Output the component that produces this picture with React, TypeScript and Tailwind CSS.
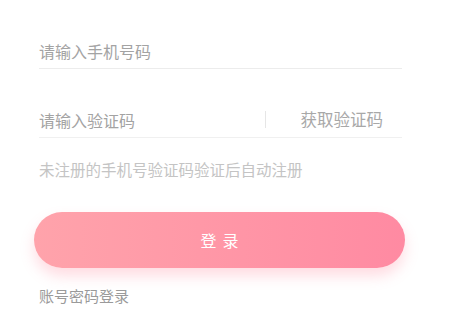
import React from 'react';

const font = { fontFamily: '"Noto Sans CJK SC", "Noto Sans", sans-serif' };

export default function App() {
  return (
    <div className="w-[449px] h-[324px] bg-white overflow-hidden" style={font}>
      <div className="pl-[39px] pr-[47px] pt-[33px]">
        <div className="h-[36px] flex items-center border-b border-[#ececec]">
          <span className="text-[16px] leading-none text-[#a3a3a3]">请输入手机号码</span>
        </div>
        <div className="mt-[33px] h-[36px] flex items-center border-b border-[#f0f0f0]">
          <span className="flex-1 text-[16px] leading-none text-[#a3a3a3]">请输入验证码</span>
          <div className="w-px h-[17px] bg-[#e6e6e6] mr-[35px]" />
          <span className="text-[16.5px] leading-none text-[#a8a8a8] pr-[19px]">获取验证码</span>
        </div>
        <p className="mt-[22px] text-[15.5px] leading-[18px] text-[#c4c4c4]">未注册的手机号验证码验证后自动注册</p>
      </div>
      <div className="pl-[34px] pr-[44px] mt-[34px]">
        <button className="w-full h-[56px] rounded-full bg-gradient-to-r from-[#ffa3ab] to-[#ff8aa2] text-white text-[16px] tracking-[6px] shadow-[0_8px_14px_rgba(255,140,160,0.3)] flex items-center justify-center pl-[6px]">
          登录
        </button>
      </div>
      <p className="pl-[39px] mt-[19px] text-[15px] leading-[18px] text-[#9a9a9a]">账号密码登录</p>
    </div>
  );
}
